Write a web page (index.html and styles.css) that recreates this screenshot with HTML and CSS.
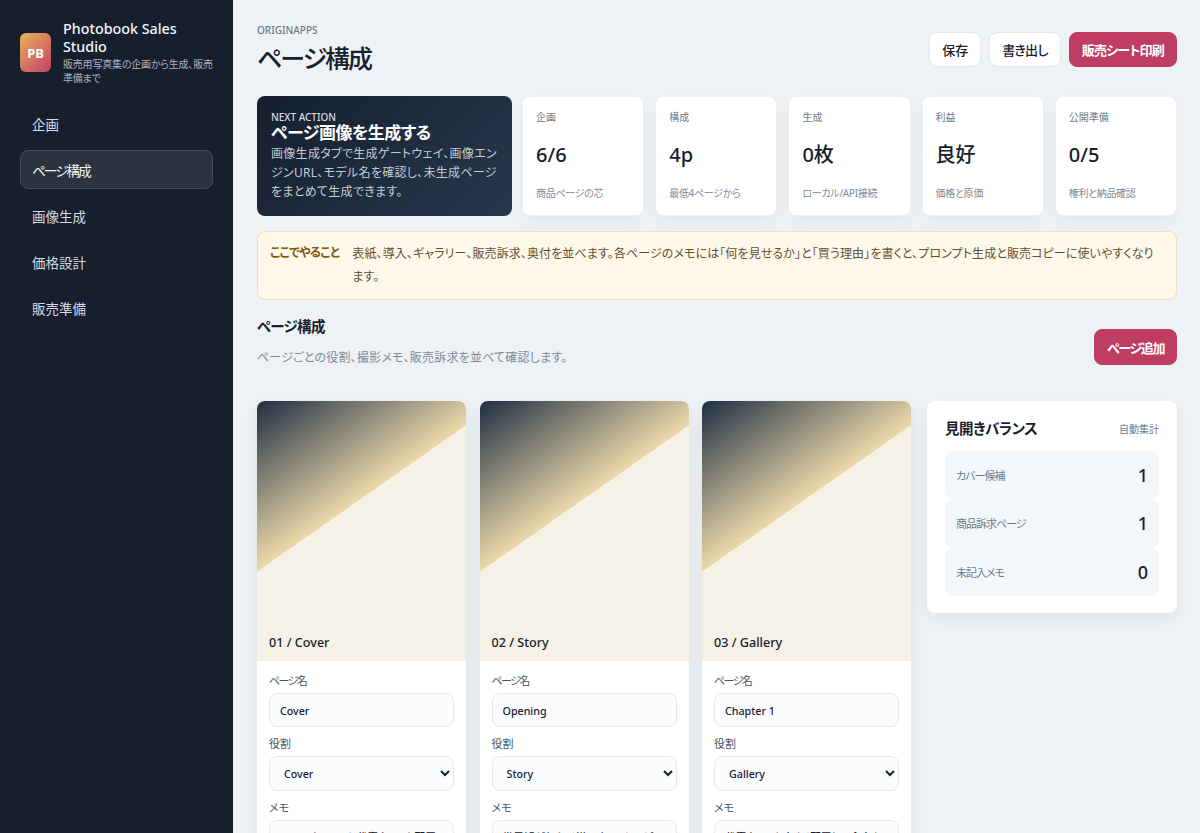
FILE: index.html
```html
<!DOCTYPE html>
<html lang="ja">
<head>
    <meta charset="UTF-8">
    <meta name="viewport" content="width=device-width, initial-scale=1.0">
    <title>Photobook Sales Studio</title>
    <link rel="stylesheet" href="styles.css">
</head>
<body>
    <div class="app">
        <aside class="sidebar">
            <div class="brand">
                <div class="brand-mark">PB</div>
                <div class="brand-text">
                    <div class="brand-name">Photobook Sales Studio</div>
                    <div class="brand-sub">販売用写真集の企画から生成、販売準備まで</div>
                </div>
            </div>
            <nav class="nav">
                <a class="nav-item">企画</a>
                <a class="nav-item active">ページ構成</a>
                <a class="nav-item">画像生成</a>
                <a class="nav-item">価格設計</a>
                <a class="nav-item">販売準備</a>
            </nav>
        </aside>

        <main class="main">
            <header class="topbar">
                <div>
                    <div class="eyebrow">ORIGINAPPS</div>
                    <h1>ページ構成</h1>
                </div>
                <div class="actions">
                    <button class="btn">保存</button>
                    <button class="btn kana-btn">書き出し</button>
                    <button class="btn primary">販売シート印刷</button>
                </div>
            </header>

            <section class="status-row">
                <div class="next-card">
                    <div class="next-label">NEXT ACTION</div>
                    <div class="next-title">ページ画像を生成する</div>
                    <div class="next-text">画像生成タブで生成ゲートウェイ、画像エンジンURL、モデル名を確認し、未生成ページをまとめて生成できます。</div>
                </div>
                <div class="stat-card"><div class="stat-label">企画</div><div class="stat-value">6/6</div><div class="stat-note">商品ページの芯</div></div>
                <div class="stat-card"><div class="stat-label">構成</div><div class="stat-value">4p</div><div class="stat-note">最低4ページから</div></div>
                <div class="stat-card"><div class="stat-label">生成</div><div class="stat-value">0枚</div><div class="stat-note">ローカル/API接続</div></div>
                <div class="stat-card"><div class="stat-label">利益</div><div class="stat-value">良好</div><div class="stat-note">価格と原価</div></div>
                <div class="stat-card"><div class="stat-label">公開準備</div><div class="stat-value">0/5</div><div class="stat-note">権利と納品確認</div></div>
            </section>

            <section class="notice">
                <div class="notice-label">ここでやること</div>
                <div class="notice-text">表紙、導入、ギャラリー、販売訴求、奥付を並べます。各ページのメモには「何を見せるか」と「買う理由」を書くと、プロンプト生成と販売コピーに使いやすくなります。</div>
            </section>

            <section class="section-head">
                <div>
                    <h2>ページ構成</h2>
                    <p>ページごとの役割、撮影メモ、販売訴求を並べて確認します。</p>
                </div>
                <button class="btn primary add-btn">ページ追加</button>
            </section>

            <section class="workspace">
                <div class="page-grid">
                    <article class="page-card">
                        <div class="thumb"><span class="thumb-title">01 / Cover</span></div>
                        <div class="page-form">
                            <label class="tight">ページ名</label>
                            <input type="text" value="Cover">
                            <label>役割</label>
                            <select><option>Cover</option></select>
                            <label>メモ</label>
                            <textarea>Show タイトルと代表カットを配置する</textarea>
                        </div>
                    </article>
                    <article class="page-card">
                        <div class="thumb"><span class="thumb-title">02 / Story</span></div>
                        <div class="page-form">
                            <label class="tight">ページ名</label>
                            <input type="text" value="Opening">
                            <label>役割</label>
                            <select><option>Story</option></select>
                            <label>メモ</label>
                            <textarea>世界観が伝わる導入カットとコピー</textarea>
                        </div>
                    </article>
                    <article class="page-card">
                        <div class="thumb"><span class="thumb-title">03 / Gallery</span></div>
                        <div class="page-form">
                            <label class="tight">ページ名</label>
                            <input type="text" value="Chapter 1">
                            <label>役割</label>
                            <select><option>Gallery</option></select>
                            <label>メモ</label>
                            <textarea>代表カットを大きく配置して余白を取る</textarea>
                        </div>
                    </article>
                </div>

                <aside class="balance">
                    <div class="balance-head">
                        <h3>見開きバランス</h3>
                        <span>自動集計</span>
                    </div>
                    <div class="balance-row"><span>カバー候補</span><strong>1</strong></div>
                    <div class="balance-row"><span>商品訴求ページ</span><strong>1</strong></div>
                    <div class="balance-row"><span>未記入メモ</span><strong>0</strong></div>
                </aside>
            </section>
        </main>
    </div>
</body>
</html>
```

FILE: styles.css
```css
* {
    margin: 0;
    padding: 0;
    box-sizing: border-box;
}

html, body {
    height: 100%;
    overflow: hidden;
}

body {
    font-family: "Noto Sans", "Noto Sans CJK JP", sans-serif;
    font-feature-settings: "palt";
    background: #eef2f5;
    color: #17202e;
}

.app {
    display: flex;
    height: 833px;
    overflow: hidden;
}

.sidebar {
    width: 233px;
    flex-shrink: 0;
    background: #151f2e;
    color: #f3f5f8;
    padding: 20px;
}

.brand {
    display: flex;
    align-items: center;
    gap: 12px;
    margin-right: -4px;
    margin-bottom: 19px;
}

.brand-mark {
    width: 31px;
    height: 39px;
    flex-shrink: 0;
    border-radius: 6px;
    background: linear-gradient(135deg, #e9b45a, #c23f66);
    color: #fff;
    display: flex;
    align-items: center;
    justify-content: center;
    font-size: 13px;
    font-weight: 700;
}

.brand-name {
    font-size: 14.3px;
    font-weight: 500;
    line-height: 17.5px;
}

.brand-sub {
    font-size: 10px;
    line-height: 13.5px;
    letter-spacing: -0.2px;
    color: #aab3c0;
    margin-top: 3px;
}

.nav {
    display: flex;
    flex-direction: column;
    gap: 7px;
}

.nav-item {
    height: 39px;
    padding: 0 11px;
    display: flex;
    align-items: center;
    font-size: 13.5px;
    color: #d5dae2;
    border: 1px solid transparent;
    border-radius: 8px;
}

.nav-item.active {
    background: #2b333f;
    border-color: #434b58;
    color: #f3f5f8;
    letter-spacing: -1.8px;
}

.main {
    flex: 1;
    min-width: 0;
    padding: 20px 23px 0 24px;
}

.topbar {
    display: flex;
    justify-content: space-between;
    align-items: flex-start;
    height: 76px;
}

.eyebrow {
    font-size: 10px;
    font-weight: 500;
    line-height: 20px;
    color: #6f7a89;
}

h1 {
    font-size: 25px;
    font-weight: 500;
    line-height: 36px;
    letter-spacing: -2px;
}

.actions {
    display: flex;
    gap: 8px;
    margin-top: 12px;
}

.btn {
    height: 35px;
    padding: 0 12px;
    font-family: inherit;
    font-feature-settings: inherit;
    font-size: 13px;
    font-weight: 500;
    color: #17202e;
    background: #fff;
    border: 1px solid #e4e8ee;
    border-radius: 8px;
}

.kana-btn {
    letter-spacing: -0.7px;
}

.btn.primary {
    background: #bf3d64;
    border-color: #bf3d64;
    color: #fff;
    font-weight: 700;
    letter-spacing: -0.75px;
}

.btn.add-btn {
    height: 36px;
    margin-top: 13px;
    letter-spacing: -1.4px;
}

.status-row {
    display: grid;
    grid-template-columns: 254px repeat(5, 1fr);
    gap: 11px;
    height: 120px;
}

.next-card {
    margin-right: -1px;
    background: linear-gradient(135deg, #151f2e, #27384c);
    color: #fff;
    border-radius: 8px;
    padding: 15px 14px;
    overflow: hidden;
}

.next-label {
    font-size: 10px;
    font-weight: 500;
    line-height: 12px;
    color: #d5dae2;
}

.next-title {
    font-size: 17px;
    font-weight: 700;
    line-height: 20px;
    letter-spacing: -0.5px;
}

.next-text {
    font-size: 12px;
    line-height: 19px;
    letter-spacing: 0.3px;
    color: #c4cbd5;
    margin-top: 1px;
}

.stat-card {
    background: #fff;
    border: 1px solid #eceff3;
    border-radius: 8px;
    padding: 13px;
    box-shadow: 0 6px 16px rgba(23, 32, 46, 0.04);
}

.stat-label {
    font-size: 10px;
    line-height: 14px;
    color: #6f7a89;
}

.stat-value {
    font-size: 20px;
    font-weight: 500;
    line-height: 28px;
    margin-top: 17px;
}

.stat-note {
    font-size: 10px;
    line-height: 14px;
    letter-spacing: -0.3px;
    color: #7f8997;
    margin-top: 17px;
}

.notice {
    display: flex;
    gap: 13px;
    height: 69px;
    margin-top: 15px;
    padding: 10px 13px 10px 12px;
    background: #fff8e8;
    border: 1px solid #ecdfbd;
    border-radius: 8px;
}

.notice-label {
    flex-shrink: 0;
    font-size: 12px;
    font-weight: 700;
    line-height: 21px;
    letter-spacing: -0.6px;
    color: #7a5a12;
}

.notice-text {
    font-size: 12px;
    line-height: 23px;
    letter-spacing: 0.1px;
    color: #5d5138;
}

.section-head {
    display: flex;
    justify-content: space-between;
    align-items: flex-start;
    margin-top: 16px;
    height: 60px;
}

h2 {
    font-size: 14.5px;
    font-weight: 700;
    line-height: 20px;
    letter-spacing: -0.7px;
}

.section-head p {
    font-size: 12px;
    line-height: 18px;
    letter-spacing: 0.2px;
    color: #7f8997;
    margin-top: 13px;
}

.workspace {
    display: flex;
    align-items: flex-start;
    gap: 16px;
    margin-top: 25px;
}

.page-grid {
    flex: 1;
    display: grid;
    grid-template-columns: repeat(3, 1fr);
    gap: 13.5px;
}

.page-card {
    background: #fff;
    border-radius: 8px;
    overflow: hidden;
    box-shadow: 0 6px 16px rgba(23, 32, 46, 0.08);
}

.thumb {
    height: 260px;
    display: flex;
    align-items: flex-end;
    padding: 0 12px 8px;
    background: linear-gradient(145deg, #1f2e42 0%, #ecd9ab 42%, #f6f1e7 42%);
}

.thumb-title {
    font-size: 12.6px;
    font-weight: 500;
    line-height: 20px;
}

.page-form {
    padding: 12px 12px 14px;
    display: flex;
    flex-direction: column;
}

.page-form label {
    font-size: 11px;
    line-height: 16px;
    color: #4a5462;
    margin-bottom: 4px;
}

.page-form label.tight {
    letter-spacing: -1.6px;
}

.page-form input,
.page-form select,
.page-form textarea {
    width: 100%;
    font-family: inherit;
    font-feature-settings: inherit;
    font-size: 10.7px;
    font-weight: 500;
    color: #17202e;
    background: #fbfcfe;
    border: 1px solid #e4e8ee;
    border-radius: 8px;
    padding: 0 10px;
    margin-bottom: 9px;
}

.page-form input {
    height: 34px;
    padding-top: 2px;
}

.page-form select {
    height: 35px;
    padding-right: 6px;
}

.page-form textarea {
    height: 90px;
    padding-top: 8px;
    resize: none;
}

.balance {
    width: 250px;
    flex-shrink: 0;
    background: #fff;
    border-radius: 8px;
    padding: 15px 18px 17px;
    box-shadow: 0 6px 16px rgba(23, 32, 46, 0.06);
}

.balance-head {
    display: flex;
    justify-content: space-between;
    align-items: center;
    margin-bottom: 11px;
}

h3 {
    font-size: 14.5px;
    font-weight: 700;
    line-height: 24px;
    letter-spacing: -0.5px;
}

.balance-head span {
    font-size: 10px;
    color: #6f7a89;
}

.balance-row {
    display: flex;
    justify-content: space-between;
    align-items: center;
    height: 48.33px;
    padding: 0 11px;
    background: #f4f7f9;
    border-radius: 8px;
}

.balance-row span {
    font-size: 11px;
    letter-spacing: -1px;
    color: #6f7a89;
}

.balance-row strong {
    font-size: 18px;
    font-weight: 500;
}
```
